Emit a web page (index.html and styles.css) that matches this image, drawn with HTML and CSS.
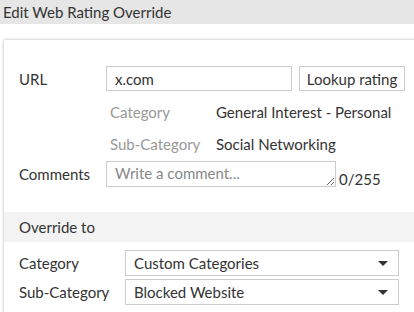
FILE: index.html
```html
<!DOCTYPE html>
<html lang="en">

<head>
  <meta charset="UTF-8">
  <meta name="viewport" content="width=device-width, initial-scale=1.0">
  <title>Edit Web Rating Override</title>
  <link rel="stylesheet" href="styles.css">
</head>

<body>
  <div class="title-bar">Edit Web Rating Override</div>

  <div class="card">
    <div class="form-body">
      <div class="row">
        <label class="row-label">URL</label>
        <div class="row-field">
          <input class="text-input url-input" type="text" value="x.com">
          <button class="btn">Lookup rating</button>
        </div>
      </div>

      <div class="info-list">
        <div class="info-row">
          <span class="info-label">Category</span>
          <span class="info-value">General Interest - Personal</span>
        </div>
        <div class="info-row">
          <span class="info-label">Sub-Category</span>
          <span class="info-value">Social Networking</span>
        </div>
      </div>

      <div class="row comments-row">
        <label class="row-label">Comments</label>
        <div class="row-field bottom">
          <textarea class="comment-box" placeholder="Write a comment..."></textarea>
          <span class="counter">0/255</span>
        </div>
      </div>
    </div>

    <div class="section-head">Override to</div>

    <div class="override-body">
      <div class="select-row">
        <label class="select-label">Category</label>
        <div class="select-box">
          <span>Custom Categories</span>
          <span class="caret"></span>
        </div>
      </div>
      <div class="select-row">
        <label class="select-label">Sub-Category</label>
        <div class="select-box">
          <span>Blocked Website</span>
          <span class="caret"></span>
        </div>
      </div>
    </div>
  </div>
</body>

</html>
```

FILE: styles.css
```css
html,
body {
  overflow: hidden;
}

body {
  margin: 0;
  font-family: Lato, "Open Sans", sans-serif;
  font-size: 15px;
  color: #333;
  background: #fff;
}

.title-bar {
  height: 24px;
  line-height: 24px;
  padding-left: 3px;
  background: #e6e6e6;
  color: #333;
}

.card {
  margin: 16px -20px 0 4px;
  background: #fff;
  box-shadow: 0 0 3px rgba(0, 0, 0, 0.3);
}

.form-body {
  padding: 26px 0 25px 15px;
}

.row {
  display: flex;
  align-items: center;
}

.row-label {
  width: 87px;
  flex: none;
}

.row-field {
  display: flex;
  align-items: center;
  gap: 7px;
}

.row-field.bottom {
  align-items: flex-end;
  gap: 3px;
}

.text-input {
  box-sizing: border-box;
  height: 25px;
  border: 1px solid #ccc;
  padding: 0 8px;
  font-family: inherit;
  font-size: 15px;
  color: #333;
  outline: none;
}

.url-input {
  width: 186px;
}

.btn {
  box-sizing: border-box;
  height: 25px;
  width: 106px;
  padding: 0;
  background: #fff;
  border: 1px solid #ccc;
  font-family: inherit;
  font-size: 15px;
  color: #333;
}

.info-list {
  margin-top: 5px;
}

.info-row {
  display: flex;
  align-items: center;
  height: 32px;
  padding-left: 91px;
}

.info-label {
  width: 106px;
  color: #999;
}

.comments-row {
  margin-top: 1px;
}

.comment-box {
  box-sizing: border-box;
  width: 230px;
  height: 26px;
  margin: 0;
  padding: 2px 8px;
  border: 1px solid #ccc;
  font-family: inherit;
  font-size: 15px;
  line-height: 19px;
  color: #333;
  display: block;
}

.comment-box::placeholder {
  color: #888;
}

.counter {
  line-height: 15px;
}

.section-head {
  height: 30px;
  line-height: 30px;
  padding-left: 15px;
  background: #f3f3f3;
}

.override-body {
  padding: 8px 0 10px 15px;
  display: flex;
  flex-direction: column;
  gap: 3px;
}

.select-row {
  display: flex;
  align-items: center;
}

.select-label {
  width: 106px;
  flex: none;
}

.select-box {
  box-sizing: border-box;
  width: 274px;
  height: 26px;
  border: 1px solid #ccc;
  padding: 0 8px;
  display: flex;
  align-items: center;
  justify-content: space-between;
}

.caret {
  width: 0;
  height: 0;
  border-left: 5px solid transparent;
  border-right: 5px solid transparent;
  border-top: 5px solid #333;
  margin-right: 2px;
}
```
